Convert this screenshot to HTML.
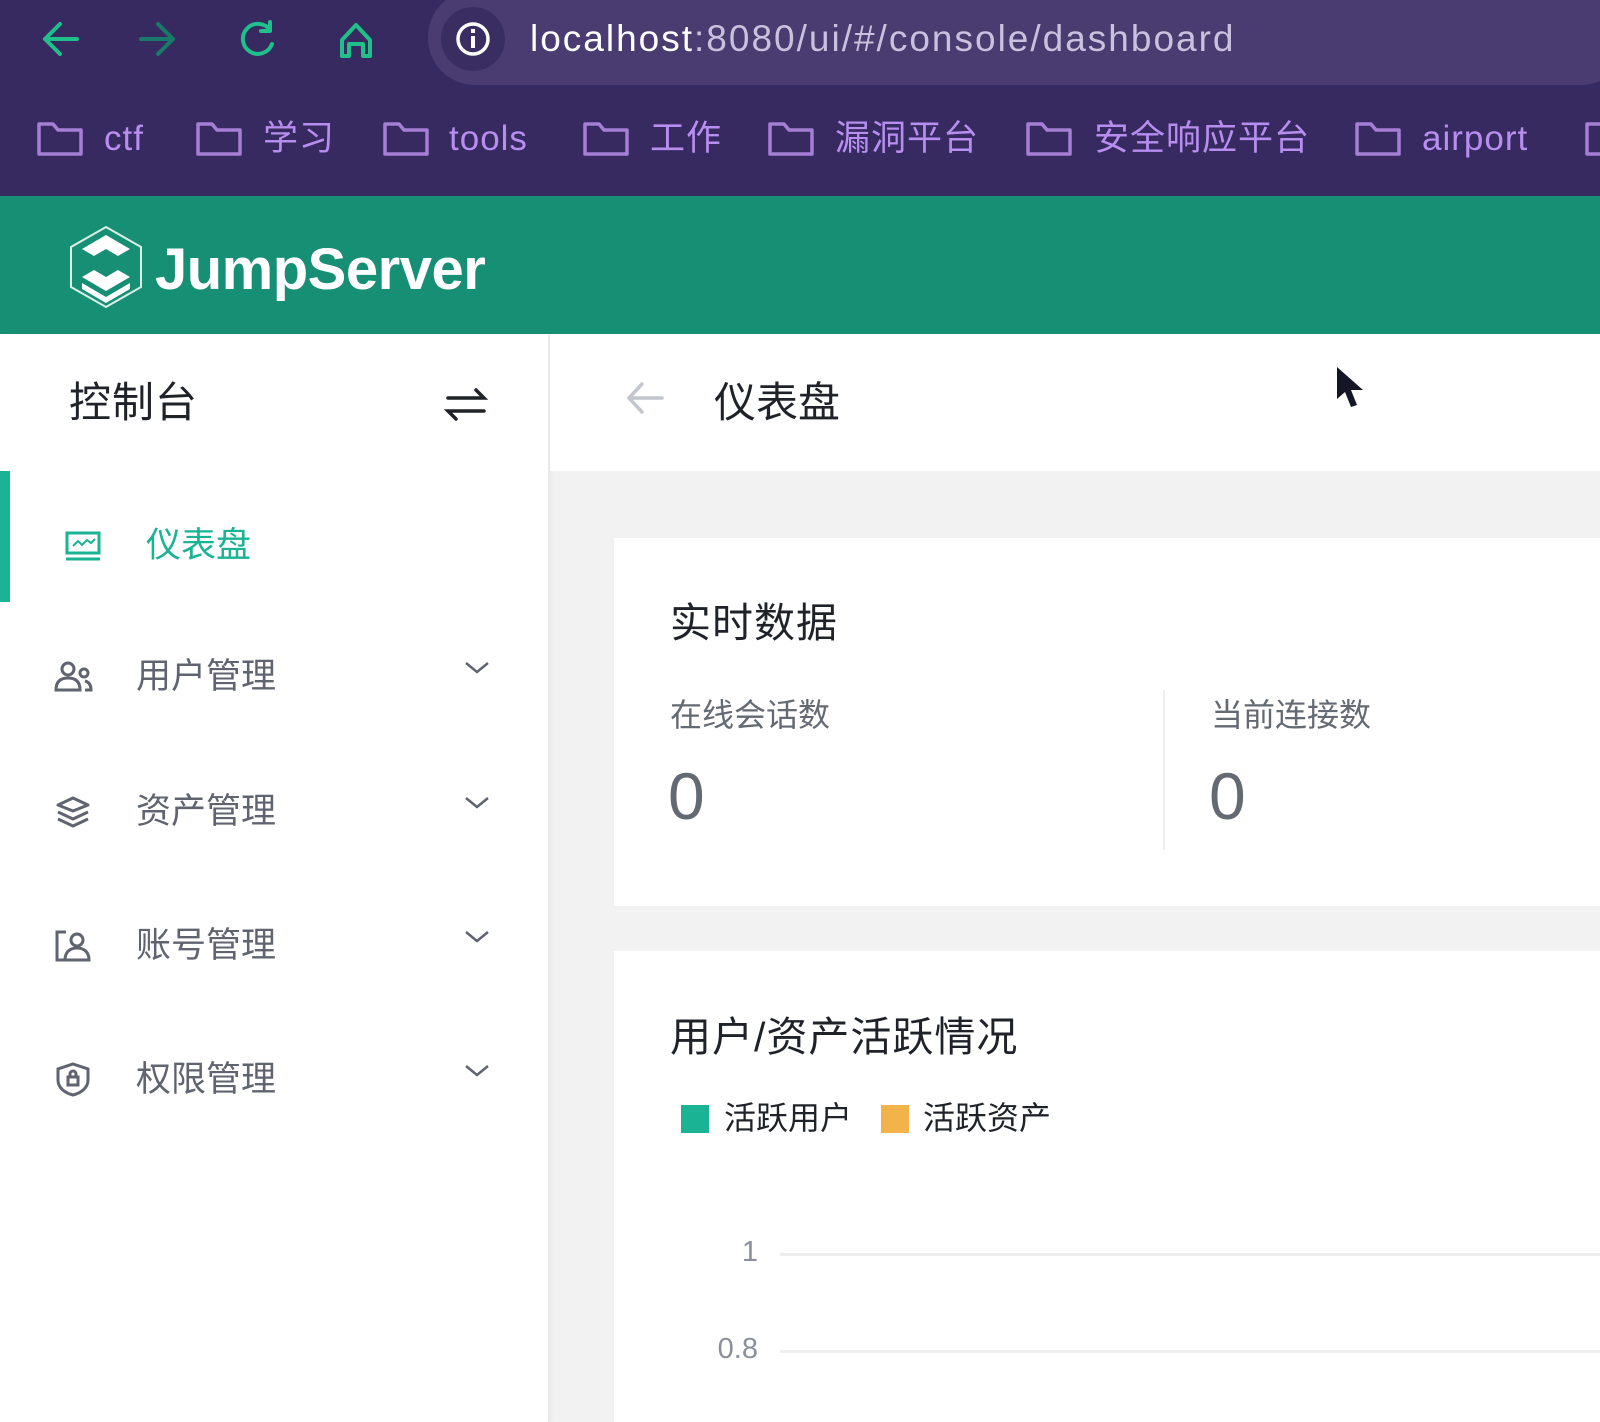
<!DOCTYPE html>
<html><head><meta charset="utf-8"><style>
*{margin:0;padding:0;box-sizing:border-box}
body{width:1600px;height:1422px;overflow:hidden;position:relative;background:#f2f2f2;font-family:"Liberation Sans","Noto Sans CJK SC",sans-serif}
.abs{position:absolute}
.t{position:absolute;white-space:nowrap;line-height:1}
.bm{font-size:35px;color:#b78ef0;letter-spacing:1px;top:121px}
</style></head><body>
<div class="abs" style="left:0;top:0;width:1600px;height:196px;background:#372a60"></div>
<div class="abs" style="left:428px;top:-10px;width:1200px;height:95px;background:#4a3c70;border-radius:47px"></div>
<div class="abs" style="left:441px;top:7px;width:64px;height:64px;border-radius:32px;background:#3a2d62"></div>
<svg class="abs" style="left:0;top:0" width="420" height="80">
<g fill="none" stroke-width="4" stroke-linecap="round" stroke-linejoin="round">
<path d="M77 39H45M60 24L45 39L60 54" stroke="#1fc08a"/>
<path d="M141 39H173M158 24L173 39L158 54" stroke="#1a7a6a"/>
<path d="M270 30A15 15 0 1 0 272 44M270 22V31H261" stroke="#1fc08a"/>
<path d="M342 56V40L356 25L370 40V56H363V44H349V56Z" stroke="#1fc08a"/>
</g></svg>
<svg class="abs" style="left:455px;top:21px" width="36" height="36"><circle cx="18" cy="18" r="15" fill="none" stroke="#fff" stroke-width="3.5"/><rect x="16" y="15" width="4" height="12" fill="#fff"/><rect x="16" y="8" width="4" height="4" fill="#fff"/></svg>
<div class="t" style="left:530px;top:20px;font-size:37px;letter-spacing:2px;color:#c9c1dd"><span style="color:#fff">localhost</span>:8080/ui/#/console/dashboard</div>
<svg class="abs" style="left:0;top:120px" width="1600" height="40">
<g fill="none" stroke="#a57fd6" stroke-width="3.5" stroke-linejoin="round">
<path d="M39 4h14l5 6h23v24H39z"/>
<path d="M198 4h14l5 6h23v24H198z"/>
<path d="M385 4h14l5 6h23v24H385z"/>
<path d="M585 4h14l5 6h23v24H585z"/>
<path d="M770 4h14l5 6h23v24H770z"/>
<path d="M1028 4h14l5 6h23v24H1028z"/>
<path d="M1357 4h14l5 6h23v24H1357z"/>
<path d="M1587 4h14l5 6h23v24H1587z"/>
</g></svg>
<div class="t bm" style="left:104px">ctf</div>
<div class="t bm" style="left:263px">学习</div>
<div class="t bm" style="left:449px">tools</div>
<div class="t bm" style="left:650px">工作</div>
<div class="t bm" style="left:835px">漏洞平台</div>
<div class="t bm" style="left:1094px">安全响应平台</div>
<div class="t bm" style="left:1422px">airport</div>
<div class="abs" style="left:0;top:196px;width:1600px;height:138px;background:#178f74"></div>
<svg class="abs" style="left:68px;top:225px" width="76" height="84">
<path d="M38 2L73 22V62L38 82L3 62V22Z" fill="none" stroke="#d8efe8" stroke-width="2"/>
<g fill="#fff">
<path d="M38 10L62 24L50 31L38 24L26 31L38 38L62 52L38 66L14 52L26 45L38 52L50 45L26 31L14 24Z"/>
<path d="M14 58L38 72L62 58V64L38 78L14 64Z"/>
</g></svg>
<div class="t" style="left:155px;top:241px;font-size:58px;font-weight:bold;color:#fff;letter-spacing:-0.5px">JumpServer</div>
<div class="abs" style="left:0;top:334px;width:548px;height:1088px;background:#fff;box-shadow:2px 0 6px rgba(0,0,0,.06)"></div>
<div class="t" style="left:69px;top:382px;font-size:42px;color:#1f2329;letter-spacing:1px">控制台</div>
<svg class="abs" style="left:444px;top:386px" width="44" height="36"><g fill="none" stroke="#1f2329" stroke-width="3.5" stroke-linecap="round"><path d="M4 12H40L32 4"/><path d="M40 25H4L12 33"/></g></svg>
<div class="abs" style="left:0;top:471px;width:10px;height:131px;background:#1ab394"></div>
<svg class="abs" style="left:64px;top:530px" width="38" height="32"><g fill="none" stroke="#1ab394" stroke-width="3"><rect x="3" y="3" width="32" height="20"/><path d="M2 29H36"/><path d="M9 16l5-5 4 4 5-5 4 3 4-4" stroke-width="2"/></g></svg>
<div class="t" style="left:146px;top:528px;font-size:35px;color:#1ab394">仪表盘</div>
<svg class="abs" style="left:54px;top:660px" width="40" height="34"><g fill="none" stroke="#5f6470" stroke-width="3"><circle cx="14" cy="9" r="6"/><path d="M2 30c0-9 5-12 12-12s12 3 12 12z"/><circle cx="30" cy="13" r="4"/><path d="M31 21c4 1 6 4 6 9h-6"/></g></svg>
<svg class="abs" style="left:54px;top:795px" width="40" height="34"><g fill="none" stroke="#5f6470" stroke-width="3" stroke-linejoin="round"><path d="M4 10L19 3L34 10L19 16Z"/><path d="M4 17L19 24L34 17"/><path d="M4 24L19 31L34 24"/></g></svg>
<svg class="abs" style="left:54px;top:929px" width="40" height="34"><g fill="none" stroke="#5f6470" stroke-width="3"><path d="M12 3H3V31H12"/><circle cx="23" cy="11" r="6"/><path d="M11 31c0-8 5-12 12-12s12 4 12 12z"/></g></svg>
<svg class="abs" style="left:54px;top:1061px" width="40" height="36"><g fill="none" stroke="#5f6470" stroke-width="3"><path d="M19 3L34 8V19C34 27 27 32 19 34C11 32 4 27 4 19V8Z"/><rect x="14" y="16" width="10" height="8"/><path d="M16 16v-3a3 3 0 0 1 6 0v3"/></g></svg>
<div class="t" style="left:136px;top:659px;font-size:35px;color:#5f6470">用户管理</div>
<div class="t" style="left:136px;top:794px;font-size:35px;color:#5f6470">资产管理</div>
<div class="t" style="left:136px;top:928px;font-size:35px;color:#5f6470">账号管理</div>
<div class="t" style="left:136px;top:1062px;font-size:35px;color:#5f6470">权限管理</div>
<svg class="abs" style="left:464px;top:660px" width="28" height="16"><path d="M2 3L13 12L24 3" fill="none" stroke="#5f6470" stroke-width="2.5"/></svg>
<svg class="abs" style="left:464px;top:795px" width="28" height="16"><path d="M2 3L13 12L24 3" fill="none" stroke="#5f6470" stroke-width="2.5"/></svg>
<svg class="abs" style="left:464px;top:929px" width="28" height="16"><path d="M2 3L13 12L24 3" fill="none" stroke="#5f6470" stroke-width="2.5"/></svg>
<svg class="abs" style="left:464px;top:1063px" width="28" height="16"><path d="M2 3L13 12L24 3" fill="none" stroke="#5f6470" stroke-width="2.5"/></svg>
<div class="abs" style="left:550px;top:334px;width:1050px;height:137px;background:#fff"></div>
<svg class="abs" style="left:624px;top:380px" width="42" height="36"><g fill="none" stroke="#c3c6cf" stroke-width="3.5" stroke-linecap="round"><path d="M38 18H5M18 4L5 18L18 32"/></g></svg>
<div class="t" style="left:714px;top:382px;font-size:42px;color:#1f2329">仪表盘</div>
<svg class="abs" style="left:1334px;top:365px" width="34" height="48"><path d="M3 2V34L11 27L17 42L23 40L17 25L29 25Z" fill="#141526"/></svg>
<div class="abs" style="left:614px;top:538px;width:986px;height:368px;background:#fff"></div>
<div class="t" style="left:670px;top:603px;font-size:41px;color:#1f2329;letter-spacing:1px">实时数据</div>
<div class="t" style="left:670px;top:699px;font-size:32px;color:#646a73">在线会话数</div>
<div class="t" style="left:1211px;top:699px;font-size:32px;color:#646a73">当前连接数</div>
<div class="abs" style="left:1163px;top:690px;width:2px;height:160px;background:#eeeeee"></div>
<div class="t" style="left:668px;top:763px;font-size:66px;color:#646a73">0</div>
<div class="t" style="left:1209px;top:763px;font-size:66px;color:#646a73">0</div>
<div class="abs" style="left:614px;top:951px;width:986px;height:471px;background:#fff"></div>
<div class="t" style="left:670px;top:1017px;font-size:41px;color:#1f2329;letter-spacing:1px">用户/资产活跃情况</div>
<div class="abs" style="left:681px;top:1105px;width:28px;height:28px;background:#1ab394"></div>
<div class="t" style="left:724px;top:1102px;font-size:32px;color:#1f2329">活跃用户</div>
<div class="abs" style="left:881px;top:1105px;width:28px;height:28px;background:#f2b34a"></div>
<div class="t" style="left:923px;top:1102px;font-size:32px;color:#1f2329">活跃资产</div>
<div class="t" style="left:700px;top:1238px;width:58px;text-align:right;font-size:29px;color:#8a8f99">1</div>
<div class="abs" style="left:780px;top:1253px;width:820px;height:3px;background:#eeeeee"></div>
<div class="t" style="left:700px;top:1335px;width:58px;text-align:right;font-size:29px;color:#8a8f99">0.8</div>
<div class="abs" style="left:780px;top:1350px;width:820px;height:3px;background:#eeeeee"></div>
</body></html>
